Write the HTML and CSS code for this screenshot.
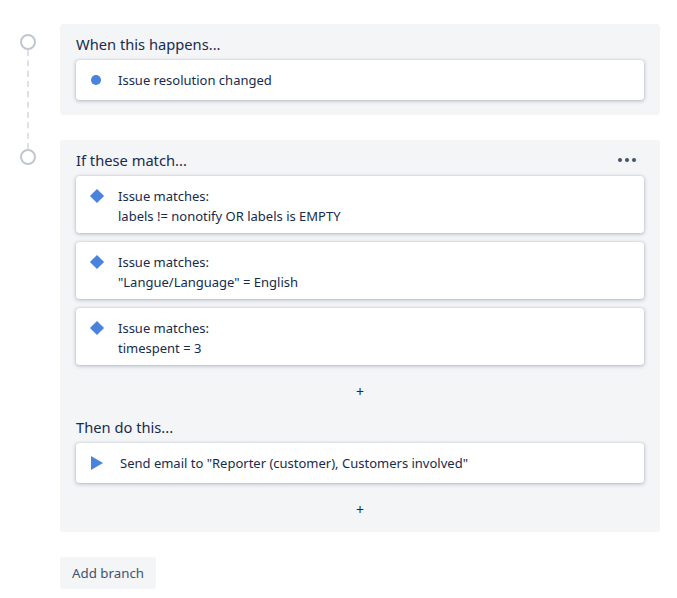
FILE: index.html
```html
<!DOCTYPE html>
<html>
<head>
<meta charset="utf-8">
<link rel="stylesheet" href="styles.css">
</head>
<body>
<div class="flow">
  <div class="step">
    <div class="rail">
      <span class="node node-first"></span>
      <span class="connector"></span>
    </div>
    <section class="panel">
      <h2 class="panel-title">When this happens...</h2>
      <div class="card">
        <span class="icon"><span class="dot"></span></span>
        <div class="card-text">Issue resolution changed</div>
      </div>
    </section>
  </div>

  <div class="step">
    <div class="rail">
      <span class="node"></span>
    </div>
    <section class="panel panel-branch">
      <div class="panel-head">
        <h2 class="panel-title">If these match...</h2>
        <span class="more"><i></i><i></i><i></i></span>
      </div>
      <div class="card-list">
        <div class="card card-multi">
          <span class="icon"><span class="diamond"></span></span>
          <div class="card-text">Issue matches:<br>labels != nonotify OR labels is EMPTY</div>
        </div>
        <div class="card card-multi">
          <span class="icon"><span class="diamond"></span></span>
          <div class="card-text">Issue matches:<br>"Langue/Language" = English</div>
        </div>
        <div class="card card-multi">
          <span class="icon"><span class="diamond"></span></span>
          <div class="card-text">Issue matches:<br>timespent = 3</div>
        </div>
      </div>
      <div class="add-row add-row-first">+</div>
      <h2 class="panel-title">Then do this...</h2>
      <div class="card">
        <span class="icon icon-action"><span class="play"></span></span>
        <div class="card-text">Send email to "Reporter (customer), Customers involved"</div>
      </div>
      <div class="add-row">+</div>
    </section>
  </div>

  <div class="actions">
    <button class="btn">Add branch</button>
  </div>
</div>
</body>
</html>
```

FILE: styles.css
```css
* { box-sizing: border-box; }

body {
  margin: 0;
  background: #ffffff;
  font-family: "Noto Sans", "Open Sans", sans-serif;
  color: #172b4d;
}

.flow {
  padding: 24px 17px 0 20px;
  display: flex;
  flex-direction: column;
  gap: 25px;
  width: 677px;
}

.step {
  display: flex;
  align-items: stretch;
}

.rail {
  width: 40px;
  flex: none;
  display: flex;
  flex-direction: column;
  align-items: flex-start;
}

.node {
  width: 16px;
  height: 16px;
  border: 2px solid #c1c7d0;
  border-radius: 50%;
  margin-top: 9px;
  background: #fff;
  flex: none;
}

.node-first { margin-top: 10px; }

.connector {
  flex: 1;
  margin-left: 7px;
  border-left: 2px dashed #dfe1e6;
  margin-bottom: -34px;
}

.panel {
  width: 600px;
  background: #f4f5f7;
  border-radius: 4px;
  padding: 8px 16px 15px;
}

.panel-branch { padding-bottom: 7px; }

.panel-title {
  margin: 0 0 4px;
  font-size: 14.7px;
  font-weight: 400;
  line-height: 24px;
  color: #172b4d;
}

.panel-head {
  display: flex;
  justify-content: space-between;
  align-items: center;
}

.more {
  display: flex;
  gap: 3px;
  margin-right: 8px;
  margin-bottom: 4px;
}

.more i {
  width: 4px;
  height: 4px;
  border-radius: 50%;
  background: #42526e;
  display: block;
}

.card-list {
  display: flex;
  flex-direction: column;
  gap: 9px;
}

.card {
  background: #ffffff;
  border-radius: 3px;
  box-shadow: 0 1px 4px rgba(9, 30, 66, 0.28), 0 0 1px rgba(9, 30, 66, 0.31);
  display: flex;
  align-items: flex-start;
  padding: 10px 16px;
  min-height: 40px;
}

.card-multi {
  padding: 11px 16px 7px;
}

.icon {
  width: 26px;
  height: 20px;
  flex: none;
  display: flex;
  align-items: center;
}

.card-multi .icon { height: 18px; }

.dot {
  width: 10px;
  height: 10px;
  border-radius: 50%;
  background: #4a83dd;
  margin-left: -1px;
}

.diamond {
  width: 10px;
  height: 10px;
  background: #4a83dd;
  transform: rotate(45deg);
}

.icon-action { width: 28px; }

.play {
  width: 0;
  height: 0;
  border-top: 7px solid transparent;
  border-bottom: 7px solid transparent;
  border-left: 12px solid #4a83dd;
  margin-left: -1px;
}

.card-text {
  font-size: 13px;
  line-height: 20px;
  color: #172b4d;
}

.card-multi .card-text { line-height: 19.5px; }

.add-row {
  height: 32px;
  margin-top: 10px;
  display: flex;
  align-items: center;
  justify-content: center;
  font-size: 14px;
  color: #172b4d;
}

.add-row-first { margin-bottom: 8px; }

.actions {
  padding-left: 40px;
}

.btn {
  font-family: "Noto Sans", "Open Sans", sans-serif;
  font-size: 13.3px;
  color: #42526e;
  background: #f4f5f7;
  border: none;
  border-radius: 3px;
  height: 32px;
  padding: 0 12px;
}
```
